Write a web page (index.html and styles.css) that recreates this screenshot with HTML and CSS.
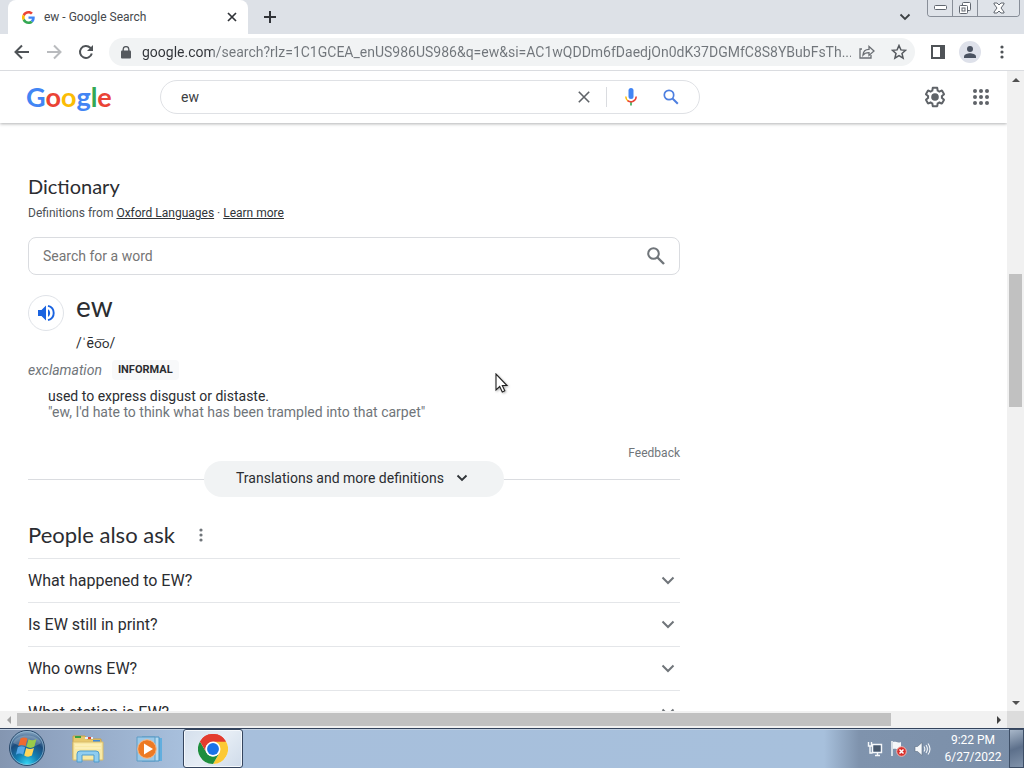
FILE: index.html
```html
<!DOCTYPE html>
<html lang="en">
<head>
<meta charset="utf-8">
<meta name="viewport" content="width=device-width, initial-scale=1">
<title>ew - Google Search</title>
<link rel="stylesheet" href="styles.css">
</head>
<body>
<div class="browser">
  <div class="tabstrip">
    <div class="tab">
      <svg class="favicon" width="13" height="13" viewBox="0 0 48 48" aria-hidden="true"><path fill="#ea4335" d="M24 9.500c3.500 0 6.700 1.200 9.200 3.600l6.900-6.900C35.900 2.400 30.500 0 24 0 14.600 0 6.500 5.400 2.600 13.200l8 6.200C12.400 13.700 17.700 9.500 24 9.500z"/><path fill="#4285f4" d="M47 24.500c0-1.600-.2-3.100-.4-4.500H24v9h12.900c-.6 3-2.200 5.500-4.700 7.200l7.700 6C44.400 38 47 31.800 47 24.500z"/><path fill="#fbbc05" d="M10.500 28.600a14.500 14.500 0 0 1 0-9.200l-8-6.200a24 24 0 0 0 0 21.600z"/><path fill="#34a853" d="M24 48c6.500 0 11.900-2.100 15.900-5.800l-7.700-6c-2.200 1.400-4.900 2.300-8.200 2.300-6.300 0-11.600-4.200-13.500-9.900l-8 6.200C6.500 42.600 14.600 48 24 48z"/></svg>
      <span class="tab-title">ew - Google Search</span>
      <button class="icon-btn tab-close" aria-label="Close tab"><svg width="10" height="10" viewBox="0 0 10 10"><path d="M1 1l8 8M9 1L1 9" stroke="#303338" stroke-width="1.700"/></svg></button>
    </div>
    <button class="icon-btn new-tab" aria-label="New tab"><svg width="12" height="12" viewBox="0 0 12 12"><path d="M6 0v12M0 6h12" stroke="#303338" stroke-width="2"/></svg></button>
    <button class="icon-btn tab-search" aria-label="Search tabs"><svg width="12" height="8" viewBox="0 0 12 8"><path d="M1.500 1.500L6 6l4.500-4.500" fill="none" stroke="#3c4043" stroke-width="1.800"/></svg></button>
    <div class="window-controls">
      <button class="win-btn" aria-label="Minimize"><svg width="13" height="6" viewBox="0 0 13 6"><rect x=".5" y=".5" width="12" height="4" rx="1" fill="#fff" stroke="#60666f"/></svg></button>
      <button class="win-btn" aria-label="Restore"><svg width="14" height="14" viewBox="0 0 14 14" fill="#fff" stroke="#60666f"><rect x="4.500" y="1.500" width="8" height="8" rx="1"/><rect x="1.500" y="4.500" width="8" height="8" rx="1"/><rect x="4" y="7" width="3" height="3"/></svg></button>
      <button class="win-btn win-close" aria-label="Close"><svg width="12" height="12" viewBox="0 0 12 12"><path d="M1 1h3l2 2 2-2h3v1L8 6l3 4v1H8L6 9l-2 2H1v-1l3-4-3-4z" fill="#fff" stroke="#60666f"/></svg></button>
    </div>
  </div>

  <div class="toolbar">
    <button class="icon-btn nav-btn" aria-label="Back"><svg width="16" height="16" viewBox="0 0 16 16"><path d="M15 8H2M8 1.500L1.500 8 8 14.500" fill="none" stroke="#4f5357" stroke-width="2"/></svg></button>
    <button class="icon-btn nav-btn" aria-label="Forward"><svg width="16" height="16" viewBox="0 0 16 16"><path d="M1 8h13M8 1.500L14.500 8 8 14.500" fill="none" stroke="#b9bbbe" stroke-width="2"/></svg></button>
    <button class="icon-btn nav-btn" aria-label="Reload"><svg width="16" height="16" viewBox="0 0 16 16"><path d="M13.800 9.500A6 6 0 1 1 12.300 3.800L14 5.500" fill="none" stroke="#4f5357" stroke-width="2"/><path d="M15 1v6H9z" fill="#4f5357"/></svg></button>
    <div class="omnibox">
      <svg width="10" height="13" viewBox="0 0 10 13" aria-hidden="true"><rect x="0" y="4.500" width="10" height="8" rx="1" fill="#55595e"/><path d="M2.200 5V3.200a2.800 2.600 0 0 1 5.600 0V5" fill="none" stroke="#55595e" stroke-width="1.400"/></svg>
      <input class="url" type="text" aria-label="Address" value="google.com/search?rlz=1C1GCEA_enUS986US986&amp;q=ew&amp;si=AC1wQDDm6fDaedjOn0dK37DGMfC8S8YBubFsTh...">
      <button class="icon-btn" aria-label="Share"><svg width="16" height="14" viewBox="0 0 16 14" fill="none" stroke="#6b6f74" stroke-width="1.300"><path d="M3 4H1v9h11v-3"/><path d="M4 10c.3-4 2.500-5.700 6-5.700V1.500L15 6l-5 4.400V7.600C7.500 7.600 5.500 8 4 10z"/></svg></button>
      <button class="icon-btn" aria-label="Bookmark this page"><svg width="16" height="16" viewBox="0 0 16 16"><path d="M8 1.500l1.900 4.400 4.700.4-3.600 3.100 1.100 4.700L8 11.600l-4.100 2.500L5 9.400 1.400 6.300l4.700-.4z" fill="none" stroke="#54585d" stroke-width="1.500"/></svg></button>
    </div>
    <button class="icon-btn side-btn" aria-label="Side panel"><svg width="14" height="14" viewBox="0 0 14 14"><rect x="1" y="1" width="12" height="12" fill="#fff" stroke="#4f5357" stroke-width="2"/><path d="M9 1h4v12H9z" fill="#4f5357"/></svg></button>
    <button class="icon-btn avatar" aria-label="Profile"><svg width="14" height="14" viewBox="0 0 14 14" fill="#4a5261"><circle cx="7" cy="4" r="3"/><path d="M1 13v-1.500C1 9.200 5 8.200 7 8.200s6 1 6 3.300V13z"/></svg></button>
    <button class="icon-btn more" aria-label="Menu"><svg width="4" height="14" viewBox="0 0 4 14" fill="#4f5357"><circle cx="2" cy="2" r="1.600"/><circle cx="2" cy="7" r="1.600"/><circle cx="2" cy="12" r="1.600"/></svg></button>
  </div>

  <div class="viewport">
    <div class="page">
      <header class="header">
        <a class="logo" href="#" aria-label="Google home"><span class="blue">G</span><span class="red">o</span><span class="yellow">o</span><span class="blue">g</span><span class="green">l</span><span class="red">e</span></a>
        <form class="search" role="search">
          <input class="search-input" type="text" aria-label="Search" value="ew">
          <button class="icon-btn clear" type="button" aria-label="Clear"><svg width="12" height="12" viewBox="0 0 12 12"><path d="M.8.8l10.400 10.400M11.200.8L.8 11.200" stroke="#5f6368" stroke-width="1.600"/></svg></button>
          <button class="icon-btn mic" type="button" aria-label="Search by voice"><svg width="12" height="18" viewBox="0 0 12 18"><rect x="3.500" y="0" width="5" height="11" rx="2.500" fill="#4285f4"/><path d="M5.200 14h1.600v3.500H5.200z" fill="#34a853"/><path d="M.8 8.500A5.200 5.500 0 0 0 3 13" fill="none" stroke="#fbbc04" stroke-width="1.500"/><path d="M2.600 12.600A5.300 5.300 0 0 0 11.200 8.500" fill="none" stroke="#ea4335" stroke-width="1.500"/></svg></button>
          <button class="icon-btn" type="submit" aria-label="Google Search"><svg width="16" height="16" viewBox="0 0 16 16" fill="none" stroke="#4d7fe0"><circle cx="6" cy="6" r="4.700" stroke-width="1.700"/><path d="M9.500 9.500l5.300 5.300" stroke-width="2"/></svg></button>
        </form>
        <div class="header-tools">
          <button class="icon-btn" aria-label="Settings"><svg width="24" height="24" viewBox="0 0 24 24" fill="#5f6368"><path d="M13.850 22.250h-3.700c-.74 0-1.360-.54-1.450-1.270l-.27-1.890c-.27-.14-.53-.29-.79-.46l-1.800.72c-.7.26-1.470-.03-1.810-.65L2.200 15.530c-.35-.66-.2-1.440.36-1.880l1.530-1.190c-.01-.15-.02-.3-.02-.46 0-.15.010-.31.020-.46l-1.520-1.190c-.59-.45-.74-1.260-.37-1.880l1.850-3.190c.34-.62 1.110-.9 1.790-.63l1.810.73c.26-.17.52-.32.78-.46l.27-1.910c.09-.7.71-1.250 1.440-1.250h3.700c.74 0 1.360.54 1.450 1.270l.27 1.890c.27.14.53.29.79.46l1.800-.72c.71-.26 1.480.03 1.820.65l1.840 3.180c.36.66.2 1.440-.36 1.880l-1.520 1.190c.010.15.020.3.020.46s-.010.310-.020.460l1.520 1.190c.56.450.720 1.230.370 1.860l-1.860 3.220c-.340.620-1.110.9-1.800.630l-1.800-.720c-.260.170-.520.320-.780.460l-.270 1.910c-.1.680-.720 1.220-1.460 1.220zm-3.230-2h2.760l.37-2.550.53-.22c.44-.18.88-.44 1.340-.78l.45-.34 2.380.96 1.380-2.400-2.030-1.580.07-.56c.03-.26.06-.51.06-.78s-.03-.53-.06-.78l-.07-.56 2.030-1.580-1.390-2.400-2.390.96-.45-.35c-.42-.32-.87-.58-1.330-.77l-.52-.22-.37-2.550h-2.760l-.37 2.550-.53.21c-.44.19-.88.44-1.340.79l-.45.33-2.380-.95-1.390 2.390 2.030 1.580-.07.56a7 7 0 0 0-.06.79c0 .26.020.53.060.78l.07.56-2.030 1.580 1.380 2.400 2.390-.96.45.35c.43.33.86.580 1.330.770l.530.220z"/><circle cx="12" cy="12" r="3.800"/></svg></button>
          <button class="icon-btn" aria-label="Google apps"><svg width="16" height="16" viewBox="0 0 16 16" fill="#5f6368"><circle cx="2" cy="2" r="2"/><circle cx="8" cy="2" r="2"/><circle cx="14" cy="2" r="2"/><circle cx="2" cy="8" r="2"/><circle cx="8" cy="8" r="2"/><circle cx="14" cy="8" r="2"/><circle cx="2" cy="14" r="2"/><circle cx="8" cy="14" r="2"/><circle cx="14" cy="14" r="2"/></svg></button>
        </div>
      </header>

      <main class="results">
        <section class="dictionary">
          <h2 class="dict-title">Dictionary</h2>
          <p class="attribution">Definitions from <a href="#">Oxford Languages</a> · <a href="#">Learn more</a></p>
          <form class="word-search">
            <input class="word-input" type="text" aria-label="Search for a word" placeholder="Search for a word">
            <button class="icon-btn" aria-label="Look up"><svg width="18" height="18" viewBox="0 0 18 18" fill="none" stroke="#70757a"><circle cx="6.500" cy="6.500" r="5.300" stroke-width="2"/><path d="M10.500 10.500l6.500 6.500" stroke-width="2.400"/></svg></button>
          </form>
          <div class="entry">
            <button class="speak" aria-label="Listen"><svg width="18" height="18" viewBox="0 0 18 18"><path d="M1 6h3.500L9 1.500v15L4.500 12H1z" fill="#1a63e0"/><path d="M11 5.200c2.800 1.300 2.800 6.300 0 7.600z" fill="#1a63e0"/><path d="M11 1.800c7.600 1.900 7.600 12.500 0 14.400" fill="none" stroke="#1a63e0" stroke-width="1.900"/></svg></button>
            <div class="entry-text">
              <h3 class="word">ew</h3>
              <p class="ipa">/ˈē<span class="ligated">o͞o</span>/</p>
            </div>
          </div>
          <p class="pos"><i>exclamation</i><span class="label">INFORMAL</span></p>
          <div class="sense">
            <p>used to express disgust or distaste.</p>
            <p class="example">"ew, I'd hate to think what has been trampled into that carpet"</p>
          </div>
          <a class="feedback" href="#">Feedback</a>
          <div class="expander">
            <button class="expand-btn">Translations and more definitions<svg width="12" height="8" viewBox="0 0 12 8"><path d="M1.500 1.500L6 6l4.500-4.500" fill="none" stroke="#303438" stroke-width="1.900"/></svg></button>
          </div>
        </section>

        <section class="paa">
          <div class="paa-head">
            <h2 class="paa-title">People also ask</h2>
            <button class="icon-btn" aria-label="About this result"><svg width="4" height="14" viewBox="0 0 4 14" fill="#70757a"><circle cx="2" cy="2" r="1.600"/><circle cx="2" cy="7" r="1.600"/><circle cx="2" cy="12" r="1.600"/></svg></button>
          </div>
          <button class="question" aria-expanded="false">What happened to EW?<svg width="14" height="9" viewBox="0 0 14 9"><path d="M1.500 1.500L7 7l5.500-5.500" fill="none" stroke="#70757a" stroke-width="2"/></svg></button>
          <button class="question" aria-expanded="false">Is EW still in print?<svg width="14" height="9" viewBox="0 0 14 9"><path d="M1.500 1.500L7 7l5.500-5.500" fill="none" stroke="#70757a" stroke-width="2"/></svg></button>
          <button class="question" aria-expanded="false">Who owns EW?<svg width="14" height="9" viewBox="0 0 14 9"><path d="M1.500 1.500L7 7l5.500-5.500" fill="none" stroke="#70757a" stroke-width="2"/></svg></button>
          <button class="question" aria-expanded="false">What station is EW?<svg width="14" height="9" viewBox="0 0 14 9"><path d="M1.500 1.500L7 7l5.500-5.500" fill="none" stroke="#70757a" stroke-width="2"/></svg></button>
        </section>
      </main>
    </div>
    <div class="vscroll">
      <span class="arrow"><svg width="8" height="4" viewBox="0 0 8 4"><path d="M0 4l4-4 4 4z" fill="#505050"/></svg></span>
      <div class="vtrack"><div class="vthumb"></div></div>
      <span class="arrow"><svg width="8" height="4" viewBox="0 0 8 4"><path d="M0 0l4 4 4-4z" fill="#505050"/></svg></span>
    </div>
    <div class="hscroll">
      <span class="arrow"><svg width="4" height="8" viewBox="0 0 4 8"><path d="M4 0L0 4l4 4z" fill="#a3a3a3"/></svg></span>
      <div class="htrack"><div class="hthumb"></div></div>
      <span class="arrow"><svg width="4" height="8" viewBox="0 0 4 8"><path d="M0 0l4 4-4 4z" fill="#404040"/></svg></span>
    </div>
    <div class="corner"></div>
  </div>
</div>

<div class="taskbar">
  <button class="icon-btn start" aria-label="Start"><svg width="38" height="38" viewBox="0 0 38 38">
    <defs><radialGradient id="orb" cx="50%" cy="95%" r="90%"><stop offset="0" stop-color="#35d4f2"/><stop offset=".35" stop-color="#1380b4"/><stop offset=".7" stop-color="#1c4b7c"/><stop offset="1" stop-color="#7d9dbb"/></radialGradient></defs>
    <circle cx="19" cy="19" r="17.500" fill="url(#orb)" stroke="#2a4a6c"/><circle cx="19" cy="19" r="16.500" fill="none" stroke="#9fc4dc" stroke-opacity=".6"/>
    <path d="M5 14C8 4 30 4 33 14 25 20 13 18 5 14z" fill="#fff" opacity=".22"/>
    <path d="M12.500 9.500c2.500-1.700 5-1.200 7 .1l-2 7.500c-2.500-1.300-4.800-1.500-7.200 0z" fill="#ee6a30"/>
    <path d="M20.500 10.200c2.600 1.400 5 1.400 8-.2l-2.200 7.800c-2.500 1.500-5 1.400-7.800 0z" fill="#9acb4a"/>
    <path d="M9.800 18.300c2.500-1.500 4.700-1.300 7.300 0l-2 7.400c-2.600-1.400-4.700-1.500-7.200 0z" fill="#55a7e8"/>
    <path d="M18.200 19c2.600 1.400 5 1.400 7.800 0l-2.100 7.500c-2.700 1.600-5 1.500-7.700-.1z" fill="#ffd65a"/></svg></button>
  <button class="icon-btn task" aria-label="Windows Explorer"><svg width="34" height="30" viewBox="0 0 34 30"><path d="M2 2h12l2 3h14v19H2z" fill="#e7c86c" stroke="#c6a04a"/><path d="M4 2h6v2H4z" fill="#37a143"/><path d="M14 3h8v2h-8z" fill="#e9f0f8"/><path d="M17 3h3v2h-3z" fill="#d94a34"/><path d="M22 6h7v2h-7z" fill="#4089d7"/><path d="M2 8h30v18H2z" fill="#f8e9a5" stroke="#d9bc68"/><path d="M4 11h26M4 14h26" stroke="#fff5c8"/><path d="M6 28V20q0-3 3-3h16q3 0 3 3v8h-5v-7H11v7z" fill="#8fcdf0" stroke="#4f9bcd"/></svg></button>
  <button class="icon-btn task" aria-label="Windows Media Player"><svg width="30" height="28" viewBox="0 0 30 28"><path d="M10 3h17v23H10z" fill="#62aede"/><path d="M7 2h17v24H7z" fill="#b6dbf0" stroke="#4b94c4"/><path d="M2 2h18v24H2z" fill="#9bc9e8" stroke="#5d9cc5"/><circle cx="12" cy="14" r="9.300" fill="#ed7a24" stroke="#f7b98a"/><path d="M9 8.500l9 5.500-9 5.500z" fill="#fff"/></svg></button>
  <button class="icon-btn task active" aria-label="Google Chrome"><svg width="30" height="30" viewBox="0 0 48 48"><circle cx="24" cy="24" r="24" fill="#fff"/><path d="M24 24L3.200 12A24 24 0 0 1 44.800 12z" fill="#e33b2e"/><path d="M24 12h20.800A24 24 0 0 1 24 48l10.400-18z" fill="#fcc934"/><path d="M3.200 12A24 24 0 0 0 24 48l10.400-18A12 12 0 0 1 13.600 30z" fill="#1e8e3e"/><path d="M3.200 12L13.600 30A12 12 0 0 1 24 12h20.800A24 24 0 0 0 3.200 12z" fill="#e33b2e"/><circle cx="24" cy="24" r="12" fill="#fff"/><circle cx="24" cy="24" r="9.500" fill="#1a73e8"/></svg></button>
  <div class="tray">
    <svg width="16" height="16" viewBox="0 0 16 16" fill="none" stroke="#f4f7fa" aria-label="Network"><path d="M5.500 3.500h9v8h-9zM8 14.500h5M10.500 12v2" stroke-width="1.400"/><path d="M1.500 1v4h3V1M3 5v7h2.500" stroke-width="1.400"/><path d="M6.500 4.500h7v6h-7z" fill="#49596d" stroke="none"/></svg>
    <svg width="17" height="17" viewBox="0 0 17 17" aria-label="Action Center"><path d="M2 1v15" stroke="#f4f7fa" stroke-width="1.500"/><path d="M3 2c3-1 4 1.500 8 0v7c-4 1.500-5-1-8 0z" fill="#f4f7fa"/><circle cx="11.500" cy="11.500" r="4.800" fill="#d92f2b" stroke="#f3bab5"/><path d="M9.500 9.500l4 4m0-4l-4 4" stroke="#fff" stroke-width="1.500"/></svg>
    <svg width="17" height="16" viewBox="0 0 17 16" aria-label="Volume"><path d="M1 5.500h2.500L8 1.500v13L3.500 10.500H1z" fill="#f4f7fa" stroke="#5d6c80" stroke-width=".6"/><path d="M10 5.500q1.700 2.500 0 5M12 4q2.800 4 0 8M14 2.500q4 5.500 0 11" fill="none" stroke="#f4f7fa" stroke-width="1.100"/></svg>
  </div>
  <div class="clock"><time>9:22 PM</time><span>6/27/2022</span></div>
  <button class="show-desktop" aria-label="Show desktop"></button>
</div>

<svg class="cursor" width="14" height="21" viewBox="0 0 14 21" aria-hidden="true"><path d="M1 1v16l3.700-3.500 2.600 5.500 2.500-1.200-2.500-5.300H12z" fill="#fff" stroke="#222" stroke-width="1.100"/></svg>
</body>
</html>
```
FILE: styles.css
```css
* { box-sizing: border-box; }
body {
  margin: 0;
  height: 100vh;
  overflow: hidden;
  display: flex;
  flex-direction: column;
  font-family: Roboto, "Liberation Sans", sans-serif;
  font-size: 14px;
  color: #2b2d31;
  background: #fff;
}
h2, h3, p { margin: 0; font-weight: 400; }
h2 { font-variant-ligatures: none; }
input, button { font: inherit; color: inherit; }
input { border: 0; outline: 0; padding: 0; background: none; min-width: 0; flex: 1; }
svg { display: block; flex: none; }
.icon-btn {
  display: flex;
  align-items: center;
  justify-content: center;
  flex: none;
  width: 32px;
  height: 24px;
  padding: 0;
  border: 0;
  background: none;
}

/* Browser frame */
.browser { flex: 1; min-height: 0; display: flex; flex-direction: column; }
.tabstrip {
  display: flex;
  height: 34px;
  padding: 0 4px 0 8px;
  align-items: center;
  background: #dde1e7;
}
.tab {
  display: flex;
  align-items: center;
  width: 240px;
  height: 34px;
  padding: 0 4px 0 14px;
  border-radius: 8px 8px 0 0;
  background: #fff;
}
.tab-title {
  flex: 1;
  margin-left: 9px;
  font-size: 12px;
  color: #45484c;
}
.tab-close { width: 24px; }
.new-tab { width: 44px; }
.tab-search { margin-left: auto; margin-right: 6px; }
.window-controls {
  display: flex;
  align-self: flex-start;
  height: 17px;
  border: 1px solid #888e98;
  border-top: 0;
  border-radius: 0 0 4px 4px;
  overflow: hidden;
}
.win-btn {
  display: flex;
  align-items: center;
  justify-content: center;
  width: 25px;
  padding: 0;
  border: 0;
  border-right: 1px solid #888e98;
  background: #dfe3e9;
}
.win-close { width: 41px; border-right: 0; }

.toolbar {
  display: flex;
  align-items: center;
  height: 37px;
  padding: 0 6px;
  border-bottom: 1px solid #dadce0;
  background: #fff;
}
.omnibox {
  flex: 1;
  display: flex;
  align-items: center;
  height: 28px;
  margin-left: 7px;
  padding: 0 0 0 12px;
  border-radius: 14px;
  background: #f1f3f4;
}
.url {
  margin-left: 11px;
  color: transparent;
  background: linear-gradient(90deg, #303338 71px, #70757a 71px);
  -webkit-background-clip: text;
  background-clip: text;
}
.side-btn { margin-left: 7px; }
.avatar { width: 22px; height: 22px; margin: 0 5px; border-radius: 50%; background: #dee1ea; }
.more { width: 32px; }

.viewport {
  flex: 1;
  min-height: 0;
  display: grid;
  grid-template: minmax(0, 1fr) 17px / minmax(0, 1fr) 17px;
}
.page { overflow: hidden; }

/* Results header */
.header {
  display: flex;
  align-items: center;
  height: 52px;
  padding: 0 10px 0 26px;
  box-shadow: 0 1px 3px rgba(32, 33, 36, .35);
}
.logo {
  width: 134px;
  font: 700 27px/32px Lato, sans-serif;
  text-decoration: none;
}
.blue { color: #4285f4; }
.red { color: #ea4335; }
.yellow { color: #fbbc05; }
.green { color: #34a853; }
.search {
  display: flex;
  align-items: center;
  width: 540px;
  height: 34px;
  padding: 0 12px 0 20px;
  border: 1px solid #dfe1e5;
  border-radius: 17px;
}
.search-input { font-size: 14px; color: #3c4043; }
.clear { width: 45px; height: 20px; border-right: 1px solid #dadce0; }
.mic { width: 48px; }
.header-tools { display: flex; gap: 14px; margin-left: auto; }

/* Dictionary card */
.results { max-width: 680px; margin-top: 49px; padding-left: 28px; }
.dict-title { font: 20px/28px Lato, sans-serif; }
.attribution { margin-top: 3px; font-size: 12px; line-height: 20px; color: #4d5156; }
.attribution a { color: #303438; }
.word-search {
  display: flex;
  align-items: center;
  height: 38px;
  margin-top: 14px;
  padding: 0 7px 0 14px;
  border: 1px solid #dadce0;
  border-radius: 8px;
}
.word-input::placeholder { color: #757575; opacity: 1; }
.entry { display: flex; gap: 12px; margin-top: 20px; }
.speak {
  display: flex;
  align-items: center;
  justify-content: center;
  width: 36px;
  height: 36px;
  padding: 0;
  border: 1px solid #e0e3e8;
  border-radius: 50%;
  background: #fff;
}
.word { font: 28px/22px Lato, sans-serif; }
.ipa { margin-top: 16px; line-height: 20px; }
.ligated { font-family: "Noto Sans", "DejaVu Sans", sans-serif; font-size: 13px; }
.pos { display: flex; align-items: center; gap: 10px; margin-top: 7px; line-height: 20px; color: #70757a; }
.label {
  padding: 0 6px;
  border-radius: 4px;
  background: #f8f9fa;
  font-size: 11px;
  font-weight: 700;
  line-height: 20px;
  color: #2b2d31;
}
.sense { margin-top: 8px; padding-left: 20px; line-height: 16px; }
.example { color: #70757a; }
.feedback {
  display: block;
  margin-top: 26px;
  font-size: 12px;
  line-height: 15px;
  text-align: right;
  text-decoration: none;
  color: #70757a;
}
.expander { display: flex; align-items: center; }
.expander::before, .expander::after { content: ""; flex: 1; height: 1px; background: #dadce0; }
.expand-btn {
  display: flex;
  align-items: center;
  justify-content: center;
  gap: 12px;
  width: 300px;
  height: 36px;
  padding: 0 4px 2px 0;
  border: 0;
  border-radius: 18px;
  background: #f1f3f4;
}

/* People also ask */
.paa-head { display: flex; align-items: center; gap: 10px; margin: 24px 0 9px; }
.paa-title { font: 22px/28px Lato, sans-serif; }
.question {
  display: flex;
  align-items: center;
  justify-content: space-between;
  width: 100%;
  height: 44px;
  padding: 0 5px 0 0;
  border: 0;
  border-top: 1px solid #e4e6e9;
  background: none;
  font-size: 16px;
}

/* Scrollbars */
.vscroll { display: flex; flex-direction: column; align-items: center; background: #f1f1f1; }
.hscroll { display: flex; background: #f1f1f1; }
.arrow { display: flex; flex: none; align-items: center; justify-content: center; width: 17px; height: 17px; }
.vtrack { flex: 1; display: flex; flex-direction: column; width: 13px; }
.vtrack::before { content: ""; flex: 186; }
.vtrack::after { content: ""; flex: 287; }
.vthumb { flex: 133; background: #c1c1c1; }
.htrack { flex: 1; display: flex; padding: 2px 0; }
.htrack::after { content: ""; flex: 99; }
.hthumb { flex: 874; background: #c1c1c1; }
.corner { background: #dcdcdc; }

/* Taskbar */
.taskbar {
  display: flex;
  flex: none;
  height: 40px;
  border-top: 1px solid #33435c;
  background: linear-gradient(90deg, #8496b1 0, #8fa3c0 50px, #a7bfdc 180px, #a7c0dc calc(100% - 200px), #7f93ad calc(100% - 165px), #7b8fa9 100%);
  box-shadow: inset 0 1px 0 #c1d1e4;
}
.start { width: 53px; height: 38px; }
.task { width: 60px; height: 39px; margin-left: 2px; }
.task:nth-child(2) { margin-left: 5px; }
.task.active {
  margin-left: 3px;
  border: 1px solid #35455e;
  border-radius: 3px;
  background: linear-gradient(135deg, #d4dfec, #e6edf5 50%, #cfdbea);
  box-shadow: inset 0 0 0 1px #f4f8fc;
}
.tray { display: flex; align-items: center; gap: 7px; margin-left: auto; }
.clock {
  display: flex;
  flex-direction: column;
  align-items: center;
  justify-content: center;
  width: 78px;
  padding-left: 6px;
  font-size: 12px;
  line-height: 17px;
  color: #fff;
}
.show-desktop {
  width: 15px;
  padding: 0;
  border: 1px solid #3d4e66;
  background: linear-gradient(160deg, #a8b7c9, #5d708b 50%, #8193ab);
}
.cursor { position: absolute; left: 495px; top: 373px; filter: drop-shadow(1px 1px 1px rgba(0, 0, 0, .3)); }
```
